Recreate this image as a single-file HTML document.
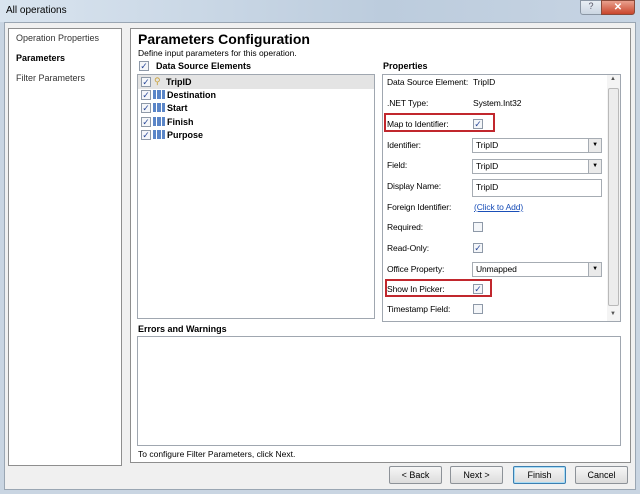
<!DOCTYPE html>
<html><head><style>
*{margin:0;padding:0;box-sizing:border-box}
body{width:640px;height:494px;background:#c9d5e2;font-family:"Liberation Sans",sans-serif;font-size:9px;color:#000;position:relative;overflow:hidden}
.a{position:absolute}
.p{font-size:8.5px;letter-spacing:-0.1px}
.cb{position:absolute;width:10px;height:10px;border:1px solid #8e99a8;background:#f4f6f9;font-size:9px;line-height:8px;text-align:center;color:#2c4a9a}
.box{position:absolute;background:#fff;border:1px solid #a0a7b0}
.btn{position:absolute;top:466px;height:18px;width:51px;border:1px solid #8d9298;border-radius:2px;background:linear-gradient(#f6f6f6,#dcdcdc);text-align:center;line-height:16px;font-size:9px}
.sel{position:absolute;height:15px;border:1px solid #a6acb3;background:#fff;padding-left:3px;line-height:13px}
.dd{position:absolute;right:0;top:0;width:13px;height:13px;border-left:1px solid #a6acb3;background:#eaeaea;font-size:6px;text-align:center;line-height:13px}
.red{position:absolute;border:2px solid #c1272d}
.ic{display:inline-block;width:12px;height:9px;background:linear-gradient(90deg,#5b86c8 0 3px,#fff 3px 4px,#5b86c8 4px 8px,#fff 8px 9px,#5b86c8 9px);vertical-align:-1px;margin-right:2px}
</style></head><body>
<div class="a" style="left:0;top:0;width:640px;height:22px;background:linear-gradient(90deg,#d9e4ef,#bcccdd 60%,#c7d4e3)"></div>
<div class="a" style="left:6px;top:5px;font-size:10px">All operations</div>
<div class="a" style="left:580px;top:0;width:22px;height:15px;border:1px solid #8a96a4;border-radius:0 0 0 3px;background:linear-gradient(#e8eef4,#cbd6e2);text-align:center;font-size:9px;color:#556">?</div>
<div class="a" style="left:601px;top:0;width:34px;height:15px;border:1px solid #8a4a3a;border-radius:0 0 3px 0;background:linear-gradient(#e9a08e,#c9452c);color:#fff;text-align:center;font-weight:bold;font-size:10px;line-height:13px">✕</div>
<div class="a" style="left:4px;top:22px;width:632px;height:468px;background:#f0f0f0;border:1px solid #9aa6b3"></div>
<div class="box" style="left:8px;top:28px;width:114px;height:438px;border-color:#8e8e8e"></div>
<div class="a" style="left:16px;top:33px;font-size:9px;color:#333">Operation Properties</div>
<div class="a" style="left:16px;top:53px;font-weight:bold;font-size:9px">Parameters</div>
<div class="a" style="left:16px;top:73px;color:#333">Filter Parameters</div>
<div class="box" style="left:130px;top:28px;width:501px;height:435px;border-color:#8e8e8e"></div>
<div class="a" style="left:138px;top:31px;font-size:14px;font-weight:bold">Parameters Configuration</div>
<div class="a" style="left:138px;top:48px;font-size:8.5px">Define input parameters for this operation.</div>
<div class="cb" style="left:139px;top:61px">✓</div>
<div class="a" style="left:156px;top:61px;font-weight:bold">Data Source Elements</div>
<div class="box" style="left:137px;top:74px;width:238px;height:245px"></div>
<div class="a" style="left:138px;top:75px;width:236px;height:14px;background:#e4e4e4"></div>
<div class="cb" style="left:141px;top:77px">✓</div><div class="a" style="left:154px;top:76px;color:#c9a13a">&#9906;</div><div class="a" style="left:166px;top:77px;font-weight:bold">TripID</div>
<div class="cb" style="left:141px;top:90px">✓</div><div class="a" style="left:153px;top:90px;font-weight:bold"><span class="ic"></span>Destination</div>
<div class="cb" style="left:141px;top:103px">✓</div><div class="a" style="left:153px;top:103px;font-weight:bold"><span class="ic"></span>Start</div>
<div class="cb" style="left:141px;top:117px">✓</div><div class="a" style="left:153px;top:117px;font-weight:bold"><span class="ic"></span>Finish</div>
<div class="cb" style="left:141px;top:130px">✓</div><div class="a" style="left:153px;top:130px;font-weight:bold"><span class="ic"></span>Purpose</div>
<div class="a" style="left:383px;top:61px;font-weight:bold">Properties</div>
<div class="box" style="left:382px;top:74px;width:239px;height:248px"></div>
<div class="a" style="left:607px;top:75px;width:13px;height:246px;background:#f4f4f4"></div>
<div class="a" style="left:608px;top:88px;width:11px;height:218px;border:1px solid #b9b9b9;border-radius:2px;background:#ececec"></div>
<div class="a" style="left:610px;top:76px;font-size:6px;color:#555">▲</div>
<div class="a" style="left:610px;top:311px;font-size:6px;color:#555">▼</div>
<div class="a p" style="left:387px;top:77px">Data Source Element:</div><div class="a p" style="left:473px;top:77px">TripID</div>
<div class="a p" style="left:387px;top:98px">.NET Type:</div><div class="a p" style="left:473px;top:98px">System.Int32</div>
<div class="red" style="left:384px;top:113px;width:111px;height:19px"></div>
<div class="a p" style="left:387px;top:119px">Map to Identifier:</div><div class="cb" style="left:473px;top:119px">✓</div>
<div class="a p" style="left:387px;top:140px">Identifier:</div><div class="sel p" style="left:472px;top:138px;width:130px">TripID<div class="dd">▼</div></div>
<div class="a p" style="left:387px;top:160px">Field:</div><div class="sel p" style="left:472px;top:159px;width:130px">TripID<div class="dd">▼</div></div>
<div class="a p" style="left:387px;top:181px">Display Name:</div><div class="sel p" style="left:472px;top:179px;width:130px;height:18px;line-height:15px">TripID</div>
<div class="a p" style="left:387px;top:202px">Foreign Identifier:</div><div class="a p" style="left:474px;top:202px;color:#1a4fb8;text-decoration:underline">(Click to Add)</div>
<div class="a p" style="left:387px;top:222px">Required:</div><div class="cb" style="left:473px;top:222px"></div>
<div class="a p" style="left:387px;top:243px">Read-Only:</div><div class="cb" style="left:473px;top:243px">✓</div>
<div class="a p" style="left:387px;top:264px">Office Property:</div><div class="sel p" style="left:472px;top:262px;width:130px">Unmapped<div class="dd">▼</div></div>
<div class="red" style="left:385px;top:279px;width:107px;height:18px"></div>
<div class="a p" style="left:387px;top:284px">Show In Picker:</div><div class="cb" style="left:473px;top:284px">✓</div>
<div class="a p" style="left:387px;top:304px">Timestamp Field:</div><div class="cb" style="left:473px;top:304px"></div>
<div class="a" style="left:138px;top:324px;font-weight:bold">Errors and Warnings</div>
<div class="box" style="left:137px;top:336px;width:484px;height:110px"></div>
<div class="a" style="left:138px;top:449px;font-size:8.5px">To configure Filter Parameters, click Next.</div>
<div class="btn" style="left:389px;width:53px">&lt; Back</div>
<div class="btn" style="left:450px;width:53px">Next &gt;</div>
<div class="btn" style="left:513px;width:53px;border-color:#3c7fb1;box-shadow:inset 0 0 0 1px #a8dcf5">Finish</div>
<div class="btn" style="left:575px;width:53px">Cancel</div>
</body></html>
